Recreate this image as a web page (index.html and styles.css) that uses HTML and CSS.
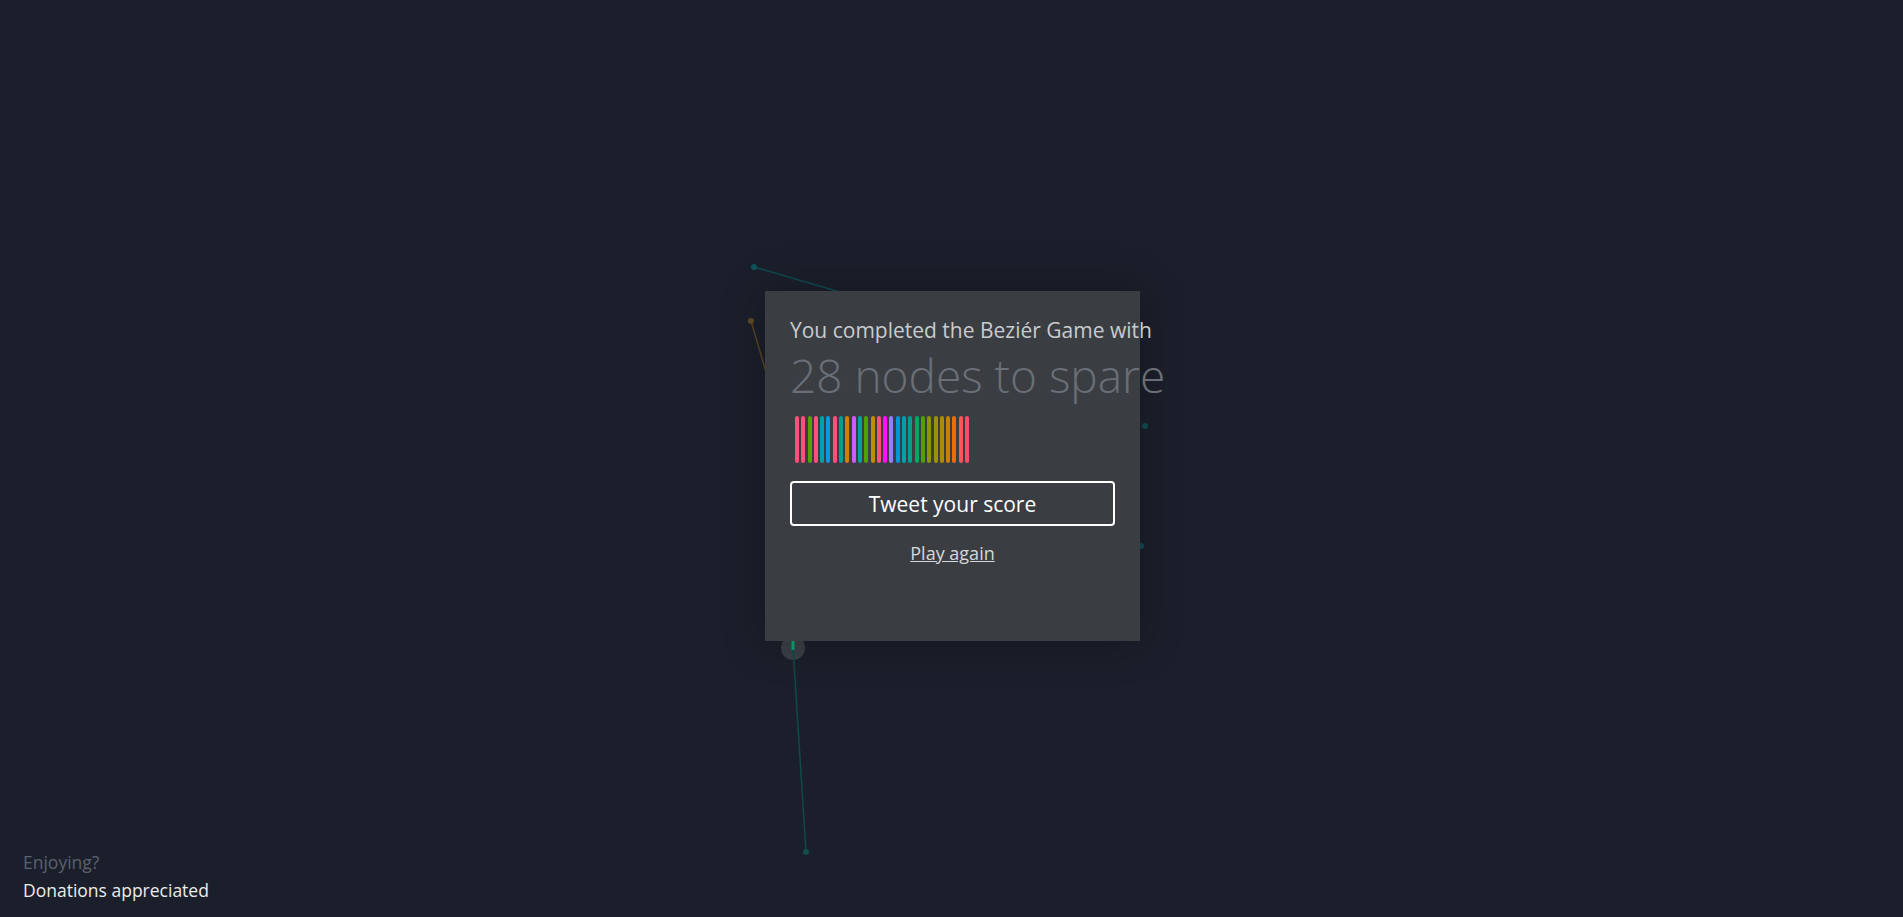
FILE: index.html
```html
<!DOCTYPE html>
<html lang="en">
<head>
<meta charset="utf-8">
<title>Bezier Game</title>
<link rel="stylesheet" href="styles.css">
</head>
<body>
<svg class="canvas" width="1903" height="917" viewBox="0 0 1903 917">
  <line x1="754" y1="267" x2="840" y2="292" stroke="#0e4a4e" stroke-width="1.5"/>
  <circle cx="754" cy="267" r="3" fill="#0f5557"/>
  <line x1="751" y1="321" x2="766" y2="372" stroke="#5a4420" stroke-width="1.5"/>
  <circle cx="751" cy="321" r="3" fill="#5e4a24"/>
  <circle cx="1145" cy="426" r="3" fill="#0f4f4f"/>
  <circle cx="1141" cy="546" r="3" fill="#0f4a55"/>
  <circle cx="793" cy="648" r="12" fill="#3a3f47"/>
  <line x1="793" y1="648" x2="806" y2="852" stroke="#0f4a44" stroke-width="1.5"/>
  <rect x="791.5" y="640" width="3" height="10" rx="1" fill="#0fa070"/>
  <circle cx="806" cy="852" r="3" fill="#0f4f48"/>
</svg>

<div class="overlay">
  <div class="modal">
    <p class="lead">You completed the Beziér Game with</p>
    <p class="score">28 nodes to spare</p>
    <div class="bars">
      <span class="bar" style="background:#ff4f7b"></span>
      <span class="bar" style="background:#ff4f7b"></span>
      <span class="bar" style="background:#56a000"></span>
      <span class="bar" style="background:#ff4f7b"></span>
      <span class="bar" style="background:#00a0b0"></span>
      <span class="bar" style="background:#0a98e0"></span>
      <span class="bar" style="background:#ff4f7b"></span>
      <span class="bar" style="background:#00a08c"></span>
      <span class="bar" style="background:#d08000"></span>
      <span class="bar" style="background:#c460ff"></span>
      <span class="bar" style="background:#00a0a0"></span>
      <span class="bar" style="background:#52a000"></span>
      <span class="bar" style="background:#c08c00"></span>
      <span class="bar" style="background:#ff4f7b"></span>
      <span class="bar" style="background:#ff10ff"></span>
      <span class="bar" style="background:#9080ff"></span>
      <span class="bar" style="background:#0098d0"></span>
      <span class="bar" style="background:#00a0a8"></span>
      <span class="bar" style="background:#00a090"></span>
      <span class="bar" style="background:#00a860"></span>
      <span class="bar" style="background:#52a000"></span>
      <span class="bar" style="background:#909400"></span>
      <span class="bar" style="background:#a09000"></span>
      <span class="bar" style="background:#b08a00"></span>
      <span class="bar" style="background:#c88000"></span>
      <span class="bar" style="background:#e87000"></span>
      <span class="bar" style="background:#ff5555"></span>
      <span class="bar" style="background:#ff4a70"></span>
    </div>
    <button class="tweet">Tweet your score</button>
    <a class="again" href="#">Play again</a>
  </div>
</div>

<div class="footer">
  <div class="enjoy">Enjoying?</div>
  <a class="donate" href="#">Donations appreciated</a>
</div>
</body>
</html>
```

FILE: styles.css
```css
html, body {
  margin: 0;
  padding: 0;
  width: 100%;
  height: 100%;
  overflow: hidden;
}
body {
  background: #1b1f2b;
  font-family: "Open Sans", "Noto Sans", sans-serif;
  position: relative;
}
.canvas {
  position: absolute;
  left: 0;
  top: 0;
}
.overlay {
  position: absolute;
  inset: 0;
  display: flex;
  justify-content: center;
  align-items: flex-start;
  padding-top: 291px;
  padding-left: 2px;
  box-sizing: border-box;
}
.modal {
  width: 375px;
  height: 350px;
  box-sizing: border-box;
  padding: 25px 25px;
  background: #3a3e43;
  box-shadow: 0 0 40px rgba(0, 0, 0, 0.25);
  display: flex;
  flex-direction: column;
}
.lead {
  margin: 0;
  font-size: 21px;
  line-height: 28px;
  color: #c9cbce;
  white-space: nowrap;
}
.score {
  margin: 4px 0 0;
  font-size: 46px;
  font-weight: 300;
  line-height: 54px;
  color: #6a6f77;
  white-space: nowrap;
}
.bars {
  display: flex;
  gap: 2.3px;
  margin: 14px 0 0 5px;
  height: 47px;
}
.bar {
  width: 4px;
  height: 47px;
  border-radius: 2px;
}
.tweet {
  margin-top: 18px;
  width: 325px;
  height: 45px;
  background: transparent;
  border: 2px solid #ffffff;
  border-radius: 4px;
  color: #ffffff;
  font-family: "Open Sans", "Noto Sans", sans-serif;
  font-size: 21px;
  padding: 0;
  line-height: 40px;
}
.again {
  margin-top: 15px;
  align-self: center;
  color: #d6d7d9;
  font-size: 18px;
  text-decoration: underline;
}
.footer {
  position: absolute;
  left: 23px;
  bottom: 13px;
  font-size: 17.5px;
  line-height: 28px;
}
.enjoy {
  color: #5b616d;
}
.donate {
  color: #ececec;
  text-decoration: none;
}
```
